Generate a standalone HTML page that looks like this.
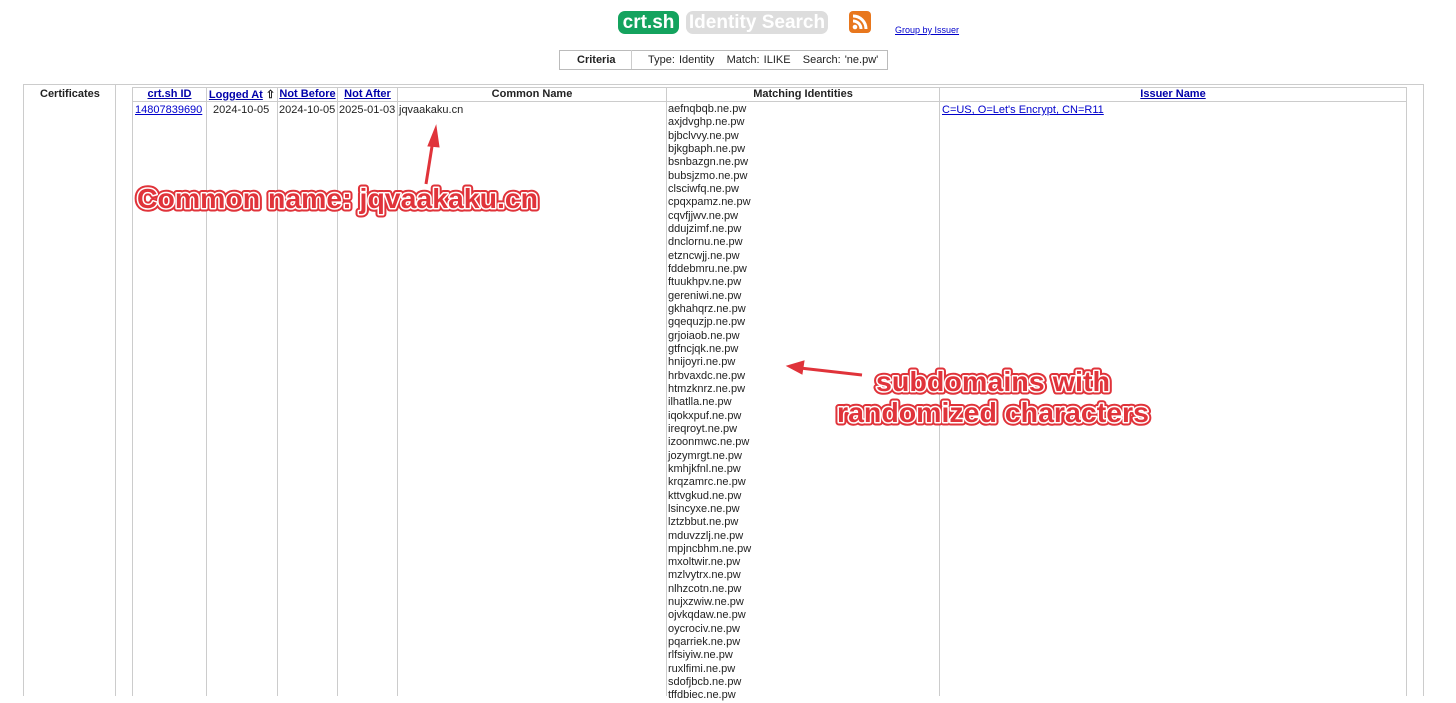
<!DOCTYPE html>
<html><head><meta charset="utf-8"><style>
body{margin:0;width:1456px;height:696px;overflow:hidden;background:#fff;font-family:"Liberation Sans",Arial,sans-serif;font-size:11px;color:#222;position:relative}
.a{position:absolute}
.v{position:absolute;width:1px;background:#ccc}
.h{position:absolute;height:1px;background:#ccc}
a{color:#00c;text-decoration:underline}
.th{position:absolute;top:88px;font-weight:bold;text-align:center;font-size:11px}
.th a{color:#00a}
.list{position:absolute;left:668px;top:103px;line-height:13.33px;font-size:11px;color:#222}
</style></head><body>
<div class="a" style="left:618px;top:11px;width:61px;height:23px;background:#14a35e;border-radius:7px;color:#fff;font-weight:bold;font-size:19px;line-height:23px;text-align:center">crt.sh</div>
<div class="a" style="left:686px;top:11px;width:142px;height:23px;background:#ddd;border-radius:7px;color:#fff;font-weight:bold;font-size:19px;line-height:23px;text-align:center">Identity Search</div>
<svg class="a" style="left:849px;top:11px" width="22" height="22" viewBox="0 0 22 22"><rect width="22" height="22" rx="4" fill="#e8771d"/><circle cx="6" cy="16" r="2.3" fill="#fff"/><path d="M4 10a8 8 0 0 1 8 8M4 5a13 13 0 0 1 13 13" stroke="#fff" stroke-width="3" fill="none"/></svg>
<a class="a" style="left:895px;top:25px;font-size:9px">Group by Issuer</a>
<div class="a" style="left:559px;top:50px;width:327px;height:18px;border:1px solid #bbb"></div>
<div class="v" style="left:631px;top:50px;height:19px"></div>
<div class="a" style="left:577px;top:54px;font-weight:bold">Criteria</div>
<div class="a" style="left:648px;top:54px;word-spacing:1px">Type: Identity &nbsp;&nbsp;Match: ILIKE &nbsp;&nbsp;Search: 'ne.pw'</div>

<div class="h" style="left:23px;top:84px;width:1401px"></div>
<div class="v" style="left:23px;top:84px;height:612px"></div>
<div class="v" style="left:115px;top:84px;height:612px"></div>
<div class="v" style="left:1423px;top:84px;height:612px"></div>
<div class="a" style="left:40px;top:88px;font-weight:bold">Certificates</div>
<div class="h" style="left:132px;top:87px;width:1275px"></div>
<div class="h" style="left:132px;top:101px;width:1275px"></div>
<div class="v" style="left:132px;top:87px;height:609px"></div>
<div class="v" style="left:206px;top:87px;height:609px"></div>
<div class="v" style="left:277px;top:87px;height:609px"></div>
<div class="v" style="left:337px;top:87px;height:609px"></div>
<div class="v" style="left:397px;top:87px;height:609px"></div>
<div class="v" style="left:666px;top:87px;height:609px"></div>
<div class="v" style="left:939px;top:87px;height:609px"></div>
<div class="v" style="left:1406px;top:87px;height:609px"></div>
<div class="th" style="left:133px;width:73px"><a>crt.sh ID</a></div>
<div class="th" style="left:207px;width:70px"><a>Logged At</a> ⇧</div>
<div class="th" style="left:278px;width:59px"><a>Not Before</a></div>
<div class="th" style="left:338px;width:59px"><a>Not After</a></div>
<div class="th" style="left:398px;width:268px">Common Name</div>
<div class="th" style="left:667px;width:272px">Matching Identities</div>
<div class="th" style="left:940px;width:466px"><a>Issuer Name</a></div>
<a class="a" style="left:135px;top:104px">14807839690</a>
<div class="a" style="left:213px;top:104px">2024-10-05</div>
<div class="a" style="left:279px;top:104px">2024-10-05</div>
<div class="a" style="left:339px;top:104px">2025-01-03</div>
<div class="a" style="left:399px;top:104px">jqvaakaku.cn</div>
<a class="a" style="left:942px;top:104px">C=US, O=Let's Encrypt, CN=R11</a>
<div class="list">aefnqbqb.ne.pw<br>axjdvghp.ne.pw<br>bjbclvvy.ne.pw<br>bjkgbaph.ne.pw<br>bsnbazgn.ne.pw<br>bubsjzmo.ne.pw<br>clsciwfq.ne.pw<br>cpqxpamz.ne.pw<br>cqvfjjwv.ne.pw<br>ddujzimf.ne.pw<br>dnclornu.ne.pw<br>etzncwjj.ne.pw<br>fddebmru.ne.pw<br>ftuukhpv.ne.pw<br>gereniwi.ne.pw<br>gkhahqrz.ne.pw<br>gqequzjp.ne.pw<br>grjoiaob.ne.pw<br>gtfncjqk.ne.pw<br>hnijoyri.ne.pw<br>hrbvaxdc.ne.pw<br>htmzknrz.ne.pw<br>ilhatlla.ne.pw<br>iqokxpuf.ne.pw<br>ireqroyt.ne.pw<br>izoonmwc.ne.pw<br>jozymrgt.ne.pw<br>kmhjkfnl.ne.pw<br>krqzamrc.ne.pw<br>kttvgkud.ne.pw<br>lsincyxe.ne.pw<br>lztzbbut.ne.pw<br>mduvzzlj.ne.pw<br>mpjncbhm.ne.pw<br>mxoltwir.ne.pw<br>mzlvytrx.ne.pw<br>nlhzcotn.ne.pw<br>nujxzwiw.ne.pw<br>ojvkqdaw.ne.pw<br>oycrociv.ne.pw<br>pqarriek.ne.pw<br>rlfsiyiw.ne.pw<br>ruxlfimi.ne.pw<br>sdofjbcb.ne.pw<br>tffdbiec.ne.pw</div>

<svg class="a" style="left:0;top:0" width="1456" height="696">
<g stroke="#e0333a" stroke-width="3" fill="#e0333a">
<line x1="426" y1="184" x2="433" y2="140"/>
<polygon points="436,126 428,146 439,147" stroke-width="1"/>
<line x1="862" y1="375" x2="800" y2="368"/>
<polygon points="787,366 804,361 802,374" stroke-width="1"/>
</g>
<g font-family="Liberation Sans, Arial, sans-serif" font-weight="bold" font-size="28" stroke-linejoin="round">
<g stroke="#e0333a" stroke-width="7" fill="#e0333a">
<text x="137" y="208" textLength="401" lengthAdjust="spacingAndGlyphs">Common name: jqvaakaku.cn</text>
<text x="876" y="391" textLength="234" lengthAdjust="spacingAndGlyphs">subdomains with</text>
<text x="837" y="422" textLength="312" lengthAdjust="spacingAndGlyphs">randomized characters</text>
</g>
<g stroke="#fff" stroke-width="3" fill="#e0333a" paint-order="stroke">
<text x="137" y="208" textLength="401" lengthAdjust="spacingAndGlyphs">Common name: jqvaakaku.cn</text>
<text x="876" y="391" textLength="234" lengthAdjust="spacingAndGlyphs">subdomains with</text>
<text x="837" y="422" textLength="312" lengthAdjust="spacingAndGlyphs">randomized characters</text>
</g>
</g>
</svg>
</body></html>
